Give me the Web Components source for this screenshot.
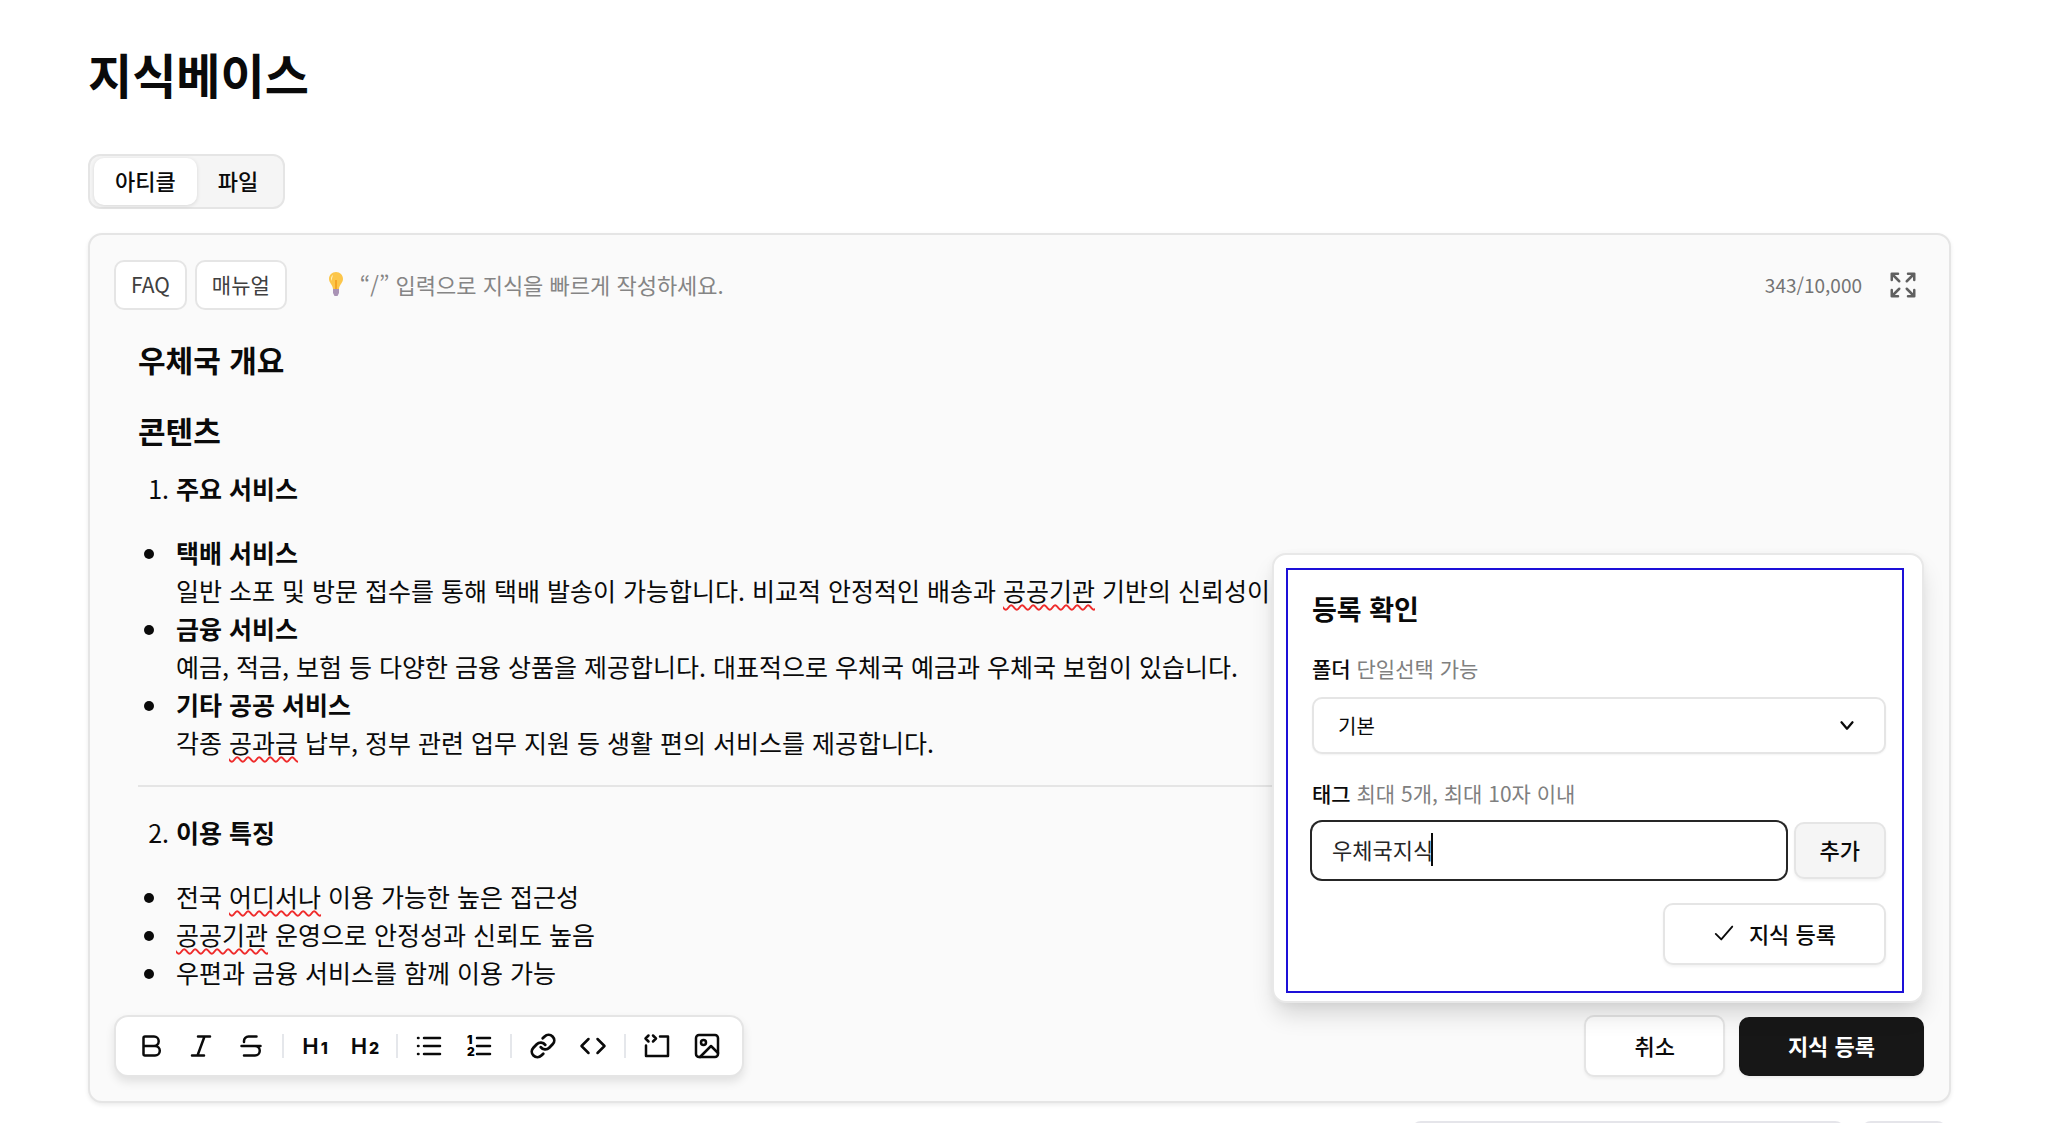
<!DOCTYPE html>
<html lang="ko">
<head>
<meta charset="utf-8">
<title>지식베이스</title>
<style>
  body {
    margin: 0;
    background: #fff;
    color: #0a0a0a;
    font-family: "Noto Sans CJK KR", "Noto Sans", sans-serif;
    font-size: 22px;
    line-height: 30px;
  }
</style>
</head>
<body>
<knowledge-page>
  <tab-group>
    <tab-item selected>아티클</tab-item>
    <tab-item>파일</tab-item>
  </tab-group>
  <article-editor>
    <article-content></article-content>
    <format-toolbar slot="tools"></format-toolbar>
    <app-button slot="actions">취소</app-button>
    <app-button slot="actions" variant="primary">지식 등록</app-button>
    <register-popover slot="popover"></register-popover>
  </article-editor>
  <list-search></list-search>
</knowledge-page>

<script>
const ICONS = {
  expand: `<path d="M3 8V3h5M3 3l6 6M16 3h5v5M21 3l-6 6M3 16v5h5M3 21l6-6M21 16v5h-5M21 21l-6-6"/>`,
  bold: `<path d="M4.500 4a1.500 1.500 0 0 1 1.500-1.500h9a4.700 4.700 0 0 1 0 9.400H4.500zM4.500 11.900H16a4.800 4.800 0 0 1 0 9.600H6A1.500 1.500 0 0 1 4.500 20z"/>`,
  italic: `<path d="M9 2.500h12M3 21.500h12M15.500 2.500L8.500 21.500"/>`,
  strike: `<path d="M17.500 2.500H9.500a4.500 4.500 0 0 0-4.500 4.500v1M2.500 12h19M16 12a4.750 4.750 0 0 1 0 9.500H5"/>`,
  list: `<path d="M7 4h16M7 12h16M7 20h16M1 4h.5M1 12h.5M1 20h.5"/>`,
  link: `<g transform="translate(-1.500 -1.500) scale(1.125)"><path d="M10 13a5 5 0 0 0 7.540.54l3-3a5 5 0 0 0-7.070-7.070l-1.720 1.710"/><path d="M14 11a5 5 0 0 0-7.540-.54l-3 3a5 5 0 0 0 7.070 7.070l1.710-1.710"/></g>`,
  code: `<path d="M7.500 5L.5 12l7 7M16.500 5l7 7-7 7"/>`,
  codeblock: `<path d="M3.500 1.500L.5 4.500l3 3M8 1.500l3 3-3 3M15 2.500h8V22H1V11.500"/>`,
  image: `<rect x="1" y="1" width="22" height="22" rx="3"/><circle cx="8.500" cy="8.500" r="2.500"/><path d="M5 23L16 12l7 7"/>`,
  check: `<path d="M3 13l6 6L21 5"/>`,
  chevron: `<path d="M6 8l6 7 6-7"/>`
};

customElements.define(
  "ui-icon",
  class UiIcon extends HTMLElement {
    constructor() {
      super();
      this.attachShadow({mode: "open"});
    }

    connectedCallback() {
      this.shadowRoot.innerHTML = `
      <style>
        :host {
          display: inline-block;
          flex: none;
          width: 24px;
          height: 24px;
        }

        svg {
          display: block;
          width: 100%;
          height: 100%;
          overflow: visible;
          fill: none;
          stroke: currentColor;
          stroke-width: var(--stroke, 2.5);
          stroke-linecap: round;
          stroke-linejoin: round;
        }
      </style>
      <svg viewBox="0 0 24 24" aria-hidden="true">${ICONS[this.getAttribute("name")]}</svg>
      `;
    }
  }
);

customElements.define(
  "knowledge-page",
  class KnowledgePage extends HTMLElement {
    constructor() {
      super();
      this.attachShadow({mode: "open"});
    }

    connectedCallback() {
      this.shadowRoot.innerHTML = `
      <style>
        :host {
          display: block;
          box-sizing: border-box;
          height: 100vh;
          overflow: hidden;
          padding: 41px 97px 0 88px;
        }

        h1 {
          margin: 0 0 49px;
          font-size: 48px;
          line-height: 64px;
          font-weight: 700;
        }
      </style>
      <h1>지식베이스</h1>
      <slot></slot>
      `;
    }
  }
);

customElements.define(
  "tab-group",
  class TabGroup extends HTMLElement {
    constructor() {
      super();
      this.attachShadow({mode: "open"});
    }

    connectedCallback() {
      this.shadowRoot.innerHTML = `
      <style>
        :host {
          display: flex;
          margin-bottom: 24px;
        }

        .tabs {
          display: flex;
          padding: 2px 4px;
          border: 2px solid #e5e5e5;
          border-radius: 12px;
          background: #f5f5f5;
        }
      </style>
      <div class="tabs" role="tablist"><slot></slot></div>
      `;
    }
  }
);

customElements.define(
  "tab-item",
  class TabItem extends HTMLElement {
    constructor() {
      super();
      this.attachShadow({mode: "open"});
    }

    connectedCallback() {
      this.shadowRoot.innerHTML = `
      <style>
        :host {
          display: block;
        }

        button {
          height: 47px;
          padding: 0 21px 3px;
          border: 0;
          border-radius: 10px;
          background: none;
          color: inherit;
          font: inherit;
          font-weight: 500;
        }

        :host([selected]) button {
          background: #fff;
          box-shadow: 0 1px 4px rgba(0, 0, 0, 0.12);
        }
      </style>
      <button type="button" role="tab" aria-selected="${this.hasAttribute("selected")}"><slot></slot></button>
      `;
    }
  }
);

customElements.define(
  "app-button",
  class AppButton extends HTMLElement {
    constructor() {
      super();
      this.attachShadow({mode: "open"});
    }

    connectedCallback() {
      this.shadowRoot.innerHTML = `
      <style>
        :host {
          display: block;
        }

        button {
          display: flex;
          align-items: center;
          gap: 14px;
          height: 62px;
          padding: 0 48px 3px;
          border: 2px solid #e5e5e5;
          border-radius: 10px;
          background: #fff;
          box-shadow: 0 2px 3px rgba(0, 0, 0, 0.05);
          color: inherit;
          font: inherit;
          font-weight: 500;
          white-space: nowrap;
        }

        :host([variant="primary"]) button {
          height: 59px;
          border-color: #171717;
          padding: 0 47px 3px;
          background: #171717;
          color: #fff;
          font-weight: 700;
        }

        :host([variant="chip"]) button {
          height: 50px;
          padding: 0 15px 2px;
          box-shadow: none;
          color: #404040;
          font-size: 21px;
          font-weight: 400;
        }

        :host([variant="muted"]) button {
          height: 57px;
          padding: 0 24px 3px;
          background: #f5f5f5;
        }
      </style>
      <button type="button"><slot></slot></button>
      `;
    }
  }
);

customElements.define(
  "article-editor",
  class ArticleEditor extends HTMLElement {
    constructor() {
      super();
      this.attachShadow({mode: "open"});
    }

    connectedCallback() {
      this.shadowRoot.innerHTML = `
      <style>
        :host {
          display: block;
          padding: 25px 25px 24px 24px;
          border: 2px solid #e5e5e5;
          border-radius: 14px;
          background: #fafafa;
          box-shadow: 0 2px 4px rgba(0, 0, 0, 0.08);
        }

        header {
          display: flex;
          align-items: center;
          gap: 8px;
        }

        .hint {
          display: flex;
          align-items: center;
          gap: 17px;
          margin: 0 auto 0 34px;
          padding-bottom: 2px;
          color: #858585;
        }

        .hint svg {
          width: 14px;
          height: 24px;
        }

        .count {
          color: #737373;
          font-size: 19px;
        }

        .expand {
          margin: 0 6px 0 18px;
          padding: 0;
          border: 0;
          background: none;
          color: #606060;
        }

        .expand ui-icon {
          display: block;
          width: 30px;
          height: 30px;
          --stroke: 2;
        }

        footer {
          position: relative;
          display: flex;
          align-items: center;
          margin-top: 24px;
        }

        .actions {
          display: flex;
          align-items: center;
          gap: 14px;
          margin-left: auto;
        }

        /* floats over the article, above the action buttons */
        .popover {
          position: absolute;
          right: 0;
          bottom: calc(100% + 12px);
        }
      </style>
      <header>
        <app-button variant="chip">FAQ</app-button>
        <app-button variant="chip">매뉴얼</app-button>
        <p class="hint">
          <svg viewBox="0 0 14 24" aria-hidden="true">
            <path d="M7 0C3 0 0 3 0 7c0 4 3.500 5 4 10h6c.500-5 4-6 4-10 0-4-3-7-7-7z" fill="#fcc64a"/>
            <path d="M4 3c-2 1-2.500 4-1.500 6C3 6 3.500 4.500 4 3z" fill="#fff3c4"/>
            <path d="M7 8v9" stroke="#f5a524" stroke-width="2"/>
            <path d="M4 17h6v4l-1.500 3h-3L4 21z" fill="#a993b5"/>
          </svg>
          “/” 입력으로 지식을 빠르게 작성하세요.
        </p>
        <span class="count">343/10,000</span>
        <button class="expand" type="button" aria-label="전체 화면"><ui-icon name="expand"></ui-icon></button>
      </header>
      <slot></slot>
      <footer>
        <slot name="tools"></slot>
        <div class="actions"><slot name="actions"></slot></div>
        <div class="popover"><slot name="popover"></slot></div>
      </footer>
      `;
    }
  }
);

customElements.define(
  "article-content",
  class ArticleContent extends HTMLElement {
    constructor() {
      super();
      this.attachShadow({mode: "open"});
    }

    connectedCallback() {
      this.shadowRoot.innerHTML = `
      <style>
        :host {
          display: block;
          padding: 29px 24px 0;
          font-size: 25px;
          line-height: 38px;
          white-space: nowrap;
        }

        h2 {
          margin: 0 0 31px;
          font-size: 30px;
          line-height: 40px;
          font-weight: 700;
        }

        h2 + h2 {
          margin-bottom: 19px;
        }

        ol {
          margin: 0 0 26px;
          padding-left: 38px;
        }

        ul {
          margin: 0;
          padding-left: 32px;
        }

        ul li {
          padding-left: 6px;
        }

        hr {
          margin: 24px 0 26px;
          border: 0;
          border-top: 2px solid #e5e5e5;
        }

        b {
          font-weight: 700;
        }

        u {
          text-decoration: underline wavy #ef2b2b 2px;
          text-decoration-skip-ink: none;
          text-underline-offset: 3px;
        }
      </style>
      <h2>우체국 개요</h2>
      <h2>콘텐츠</h2>
      <ol>
        <li><b>주요 서비스</b></li>
      </ol>
      <ul>
        <li><b>택배 서비스</b><br>일반 소포 및 방문 접수를 통해 택배 발송이 가능합니다. 비교적 안정적인 배송과 <u>공공기관</u> 기반의 신뢰성이 큼</li>
        <li><b>금융 서비스</b><br>예금, 적금, 보험 등 다양한 금융 상품을 제공합니다. 대표적으로 우체국 예금과 우체국 보험이 있습니다.</li>
        <li><b>기타 공공 서비스</b><br>각종 <u>공과금</u> 납부, 정부 관련 업무 지원 등 생활 편의 서비스를 제공합니다.</li>
      </ul>
      <hr>
      <ol start="2">
        <li><b>이용 특징</b></li>
      </ol>
      <ul>
        <li>전국 <u>어디서나</u> 이용 가능한 높은 접근성</li>
        <li><u>공공기관</u> 운영으로 안정성과 신뢰도 높음</li>
        <li>우편과 금융 서비스를 함께 이용 가능</li>
      </ul>
      `;
    }
  }
);

customElements.define(
  "format-toolbar",
  class FormatToolbar extends HTMLElement {
    constructor() {
      super();
      this.attachShadow({mode: "open"});
    }

    connectedCallback() {
      this.shadowRoot.innerHTML = `
      <style>
        :host {
          display: flex;
          align-items: center;
          height: 58px;
          padding: 0 10px;
          border: 2px solid #e5e5e5;
          border-radius: 14px;
          background: #fff;
          box-shadow: 0 5px 10px rgba(0, 0, 0, 0.1);
        }

        button {
          display: flex;
          align-items: center;
          justify-content: center;
          width: 50px;
          height: 50px;
          padding: 0;
          border: 0;
          background: none;
          color: inherit;
        }

        .heading {
          align-items: baseline;
          gap: 2px;
          font: 600 22px/50px Inter, sans-serif;
        }

        .heading small {
          font-size: 16px;
          font-weight: 800;
        }

        .line {
          width: 2px;
          height: 24px;
          margin: 0 6px;
          background: #e5e7eb;
        }

        .numbered {
          display: block;
          width: 24px;
          height: 24px;
          overflow: visible;
          stroke: currentColor;
          stroke-width: 2.5;
          stroke-linecap: round;
        }

        .numbered text {
          stroke: none;
          font: 900 12px Inter, sans-serif;
        }
      </style>
      <button type="button" aria-label="굵게"><ui-icon name="bold"></ui-icon></button>
      <button type="button" aria-label="기울임"><ui-icon name="italic"></ui-icon></button>
      <button type="button" aria-label="취소선"><ui-icon name="strike"></ui-icon></button>
      <span class="line"></span>
      <button type="button" class="heading">H<small>1</small></button>
      <button type="button" class="heading">H<small>2</small></button>
      <span class="line"></span>
      <button type="button" aria-label="글머리 목록"><ui-icon name="list"></ui-icon></button>
      <button type="button" aria-label="번호 목록">
        <svg class="numbered" viewBox="0 0 24 24">
          <path d="M10 4h13M10 12h13M10 20h13"/>
          <text x="0" y="10">1</text>
          <text x="0" y="22">2</text>
        </svg>
      </button>
      <span class="line"></span>
      <button type="button" aria-label="링크"><ui-icon name="link"></ui-icon></button>
      <button type="button" aria-label="코드"><ui-icon name="code"></ui-icon></button>
      <span class="line"></span>
      <button type="button" aria-label="코드 블록"><ui-icon name="codeblock"></ui-icon></button>
      <button type="button" aria-label="이미지"><ui-icon name="image"></ui-icon></button>
      `;
    }
  }
);

customElements.define(
  "register-popover",
  class RegisterPopover extends HTMLElement {
    constructor() {
      super();
      this.attachShadow({mode: "open"});
    }

    connectedCallback() {
      this.shadowRoot.innerHTML = `
      <style>
        :host {
          display: block;
          padding: 13px 18px 8px 12px;
          border: 2px solid #e8e8e8;
          border-radius: 14px;
          background: #fff;
          box-shadow: 0 14px 24px -4px rgba(0, 0, 0, 0.16), 0 2px 8px rgba(0, 0, 0, 0.04);
        }

        form {
          box-sizing: border-box;
          width: 618px;
          padding: 19px 16px 26px 24px;
          border: 2px solid #1d10d8;
        }

        h2 {
          margin: 0 0 24px;
          font-size: 27px;
          line-height: 40px;
          font-weight: 700;
        }

        label {
          display: block;
          margin-bottom: 14px;
          font-size: 21px;
          font-weight: 500;
        }

        label span {
          color: #808080;
          font-weight: 400;
        }

        .select {
          display: grid;
          align-items: center;
          margin-bottom: 24px;
        }

        .select > * {
          grid-area: 1 / 1;
        }

        .select ui-icon {
          justify-self: end;
          margin-right: 28px;
          pointer-events: none;
          --stroke: 2.5;
        }

        select {
          appearance: none;
          width: 100%;
          height: 57px;
          padding: 0 24px;
          border: 2px solid #e5e5e5;
          border-radius: 10px;
          background: #fff;
          box-shadow: 0 1px 2px rgba(0, 0, 0, 0.05);
          color: inherit;
          font: inherit;
          font-size: 20px;
        }

        .tag {
          display: flex;
          align-items: center;
          gap: 8px;
          margin-bottom: 24px;
        }

        /* the caret is painted at the end of the typed tag */
        input {
          flex: 1;
          box-sizing: border-box;
          min-width: 0;
          height: 57px;
          padding: 0 20px 3px;
          border: 0;
          border-radius: 10px;
          outline: 0;
          background: linear-gradient(#0a0a0a, #0a0a0a) 119px 11px / 2px 33px no-repeat #fff;
          box-shadow: 0 0 0 2px #262626;
          caret-color: transparent;
          color: #262626;
          font: inherit;
        }

        .submit {
          display: flex;
          justify-content: flex-end;
        }

        ui-icon {
          width: 22px;
          height: 22px;
          --stroke: 2;
        }
      </style>
      <form>
        <h2>등록 확인</h2>
        <label for="folder">폴더 <span>단일선택 가능</span></label>
        <div class="select">
          <select id="folder">
            <option>기본</option>
          </select>
          <ui-icon name="chevron"></ui-icon>
        </div>
        <label for="tag">태그 <span>최대 5개, 최대 10자 이내</span></label>
        <div class="tag">
          <input id="tag" type="text" maxlength="10" value="우체국지식">
          <app-button variant="muted">추가</app-button>
        </div>
        <div class="submit">
          <app-button><ui-icon name="check"></ui-icon>지식 등록</app-button>
        </div>
      </form>
      `;
    }
  }
);

customElements.define(
  "list-search",
  class ListSearch extends HTMLElement {
    constructor() {
      super();
      this.attachShadow({mode: "open"});
    }

    connectedCallback() {
      this.shadowRoot.innerHTML = `
      <style>
        :host {
          display: flex;
          justify-content: flex-end;
          gap: 16px;
          margin-top: 18px;
          padding-right: 4px;
        }

        input,
        button {
          box-sizing: border-box;
          height: 50px;
          border: 2px solid #e5e5ea;
          border-radius: 10px;
          background: #fff;
        }

        input {
          width: 434px;
        }

        button {
          width: 86px;
        }
      </style>
      <input type="search" aria-label="검색어">
      <button type="button" aria-label="검색"></button>
      `;
    }
  }
);
</script>
</body>
</html>
